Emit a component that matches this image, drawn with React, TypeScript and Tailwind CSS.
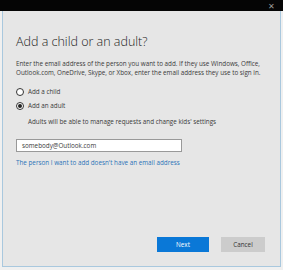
import React from "react";

export default function App() {
    return (
        <div className="w-[283px] h-[270px] bg-[#f0f0f0] flex flex-col overflow-hidden" style={{ fontFamily: '"Open Sans", "Liberation Sans", sans-serif' }}>
            <div className="h-[11px] bg-[#050505] flex items-center justify-end pr-[8px] shrink-0">
                <span className="text-[#9a9a9a] text-[8px] leading-none">✕</span>
            </div>
            <div className="mx-[2px] w-[279px] h-[256px] bg-[#e6e6e6] border-x border-b border-[#a9c8de] flex flex-col px-[13px]">
                <h1 className="mt-[25px] text-[12.5px] leading-none text-[#222] font-light">Add a child or an adult?</h1>
                <p className="mt-[10px] text-[6.3px] leading-[9px] text-[#3a3a3a]">
                    Enter the email address of the person you want to add. If they use Windows, Office, Outlook.com, OneDrive, Skype, or Xbox, enter the email address they use to sign in.
                </p>
                <div className="mt-[10px] flex items-center gap-[4px] h-[10px]">
                    <span className="w-[8px] h-[8px] rounded-full border border-[#333] bg-white" />
                    <span className="text-[6.3px] text-[#3a3a3a]">Add a child</span>
                </div>
                <div className="mt-[4px] flex items-center gap-[4px] h-[10px]">
                    <span className="w-[8px] h-[8px] rounded-full border border-[#333] bg-white flex items-center justify-center">
                        <span className="w-[4px] h-[4px] rounded-full bg-[#222]" />
                    </span>
                    <span className="text-[6.3px] text-[#3a3a3a]">Add an adult</span>
                </div>
                <p className="mt-[6px] ml-[12px] text-[6.3px] text-[#3a3a3a]">Adults will be able to manage requests and change kids' settings</p>
                <div className="mt-[13px] w-[166px] h-[13px] bg-white border border-[#999] flex items-center px-[5px]">
                    <span className="text-[6.3px] text-[#3a3a3a]">somebody@Outlook.com</span>
                </div>
                <p className="mt-[6px] text-[6.3px] text-[#2b73b8]">The person I want to add doesn't have an email address</p>
                <div className="mt-auto mb-[14px] flex justify-end gap-[12px] pr-[2px]">
                    <button className="w-[52px] h-[15px] bg-[#0a78d7] text-white text-[6.3px]">Next</button>
                    <button className="w-[44px] h-[15px] bg-[#cccccc] text-[#333] text-[6.3px]">Cancel</button>
                </div>
            </div>
        </div>
    );
}
